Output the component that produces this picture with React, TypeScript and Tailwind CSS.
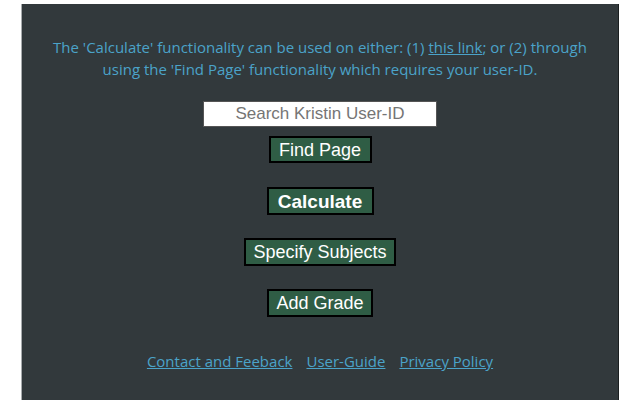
import React from "react";

export default function App() {
  const btn =
    "h-[27px] bg-[#2f5d45] border-2 border-black text-white text-[18px] leading-none flex items-center justify-center";
  return (
    <div className="w-[640px] h-[400px] bg-white overflow-hidden">
      <div className="ml-[21px] mt-[4px] w-[598px] h-[400px] bg-[#32393c] border-l border-r border-l-[#a8acae] border-r-[#1b1f20] flex flex-col items-center pt-[32px]">
        <p
          className="text-[15px] leading-[22px] text-[#4ba3c9] text-center w-[560px]"
          style={{ fontFamily: '"Open Sans", sans-serif' }}
        >
          The 'Calculate' functionality can be used on either: (1){" "}
          <a className="underline">this link</a>; or (2) through using the 'Find
          Page' functionality which requires your user-ID.
        </p>
        <div
          className="mt-[21px] w-[234px] h-[26px] bg-white border border-[#555] flex items-center justify-center text-[17px] text-[#757575]"
          style={{ fontFamily: '"Liberation Sans", Arial, sans-serif' }}
        >
          Search Kristin User-ID
        </div>
        <div
          className="flex flex-col items-center"
          style={{ fontFamily: '"Liberation Sans", Arial, sans-serif' }}
        >
          <div className={`${btn} mt-[9px] w-[103px] h-[26px]`}>Find Page</div>
          <div className={`${btn} mt-[24px] w-[107px] h-[28px] font-bold text-[19px]`}>Calculate</div>
          <div className={`${btn} mt-[23px] w-[152px] h-[28px]`}>Specify Subjects</div>
          <div className={`${btn} mt-[23px] w-[106px] h-[28px]`}>Add Grade</div>
        </div>
        <div
          className="mt-[33px] flex gap-[14px] text-[15px] text-[#4ba3c9] leading-[22px]"
          style={{ fontFamily: '"Open Sans", sans-serif' }}
        >
          <a className="underline">Contact and Feeback</a>
          <a className="underline">User-Guide</a>
          <a className="underline">Privacy Policy</a>
        </div>
      </div>
    </div>
  );
}
